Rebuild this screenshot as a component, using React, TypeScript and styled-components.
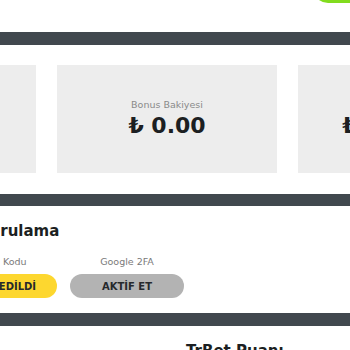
import React from "react";
import styled, { createGlobalStyle } from "styled-components";

const GlobalStyle = createGlobalStyle`
  html, body { margin: 0; padding: 0; background: #ffffff; }
  body { font-family: "DejaVu Sans", "Noto Sans", sans-serif; overflow: hidden; }
`;

const Page = styled.div`
  width: 350px;
  height: 350px;
  overflow: hidden;
  background: #ffffff;
`;

const TopBar = styled.div`
  height: 32px;
  display: flex;
  justify-content: flex-end;
  align-items: flex-start;
`;

const GreenPill = styled.div`
  width: 60px;
  height: 30px;
  margin-top: -27px;
  margin-right: -23px;
  border-radius: 15px;
  background: #82dc1e;
`;

const Divider = styled.div<{ $h: number }>`
  height: ${(p) => p.$h}px;
  background: #41484e;
`;

const CardsRow = styled.div`
  display: flex;
  gap: 21px;
  padding: 20px 0 21px;
  margin-left: -184px;
`;

const Card = styled.div`
  flex: 0 0 220px;
  height: 108px;
  background: #ededed;
  display: flex;
  flex-direction: column;
  align-items: center;
  justify-content: center;
`;

const CardLabel = styled.div`
  font-size: 9.5px;
  line-height: 14px;
  color: #8a8a8a;
  white-space: nowrap;
`;

const CardValue = styled.div`
  font-size: 22px;
  line-height: 28px;
  font-weight: 700;
  color: #1c1f22;
  white-space: nowrap;
`;

const VerifySection = styled.div`
  padding: 15px 0 15px;
  margin-left: -91px;
`;

const SectionTitle = styled.div`
  font-size: 15px;
  line-height: 20px;
  font-weight: 700;
  color: #1c1f22;
  white-space: nowrap;
`;

const FieldRow = styled.div`
  display: flex;
  gap: 13px;
  margin-top: 14px;
  padding-left: 34px;
`;

const Field = styled.div`
  display: flex;
  flex-direction: column;
  align-items: center;
  gap: 5px;
  width: 114px;
`;

const FieldLabel = styled.div`
  font-size: 9.5px;
  line-height: 14px;
  color: #7a7a7a;
  white-space: nowrap;
`;

const PillButton = styled.div<{ $tone: "yellow" | "gray" }>`
  width: 114px;
  height: 24px;
  border-radius: 12px;
  display: flex;
  align-items: center;
  justify-content: center;
  font-size: 10px;
  font-weight: 700;
  color: #26292c;
  white-space: nowrap;
  background: ${(p) => (p.$tone === "yellow" ? "#fdd72f" : "#b3b3b3")};
`;

const PointsSection = styled.div`
  padding: 14px 0 0 186px;
`;

const PointsTitle = styled.div`
  font-size: 15px;
  line-height: 22px;
  font-weight: 700;
  color: #1c1f22;
  white-space: nowrap;
`;

export default function App() {
  return (
    <Page>
      <GlobalStyle />
      <TopBar>
        <GreenPill />
      </TopBar>
      <Divider $h={13} />
      <CardsRow>
        <Card>
          <CardLabel>Ana Bakiye</CardLabel>
          <CardValue>₺ 0.00</CardValue>
        </Card>
        <Card>
          <CardLabel>Bonus Bakiyesi</CardLabel>
          <CardValue>₺ 0.00</CardValue>
        </Card>
        <Card>
          <CardLabel>Çekilebilir Bakiye</CardLabel>
          <CardValue>₺ 1,000.00</CardValue>
        </Card>
      </CardsRow>
      <Divider $h={12} />
      <VerifySection>
        <SectionTitle>Hesap Doğrulama</SectionTitle>
        <FieldRow>
          <Field>
            <FieldLabel>Email Kodu</FieldLabel>
            <PillButton $tone="yellow">TEYİT EDİLDİ</PillButton>
          </Field>
          <Field>
            <FieldLabel>Google 2FA</FieldLabel>
            <PillButton $tone="gray">AKTİF ET</PillButton>
          </Field>
        </FieldRow>
      </VerifySection>
      <Divider $h={13} />
      <PointsSection>
        <PointsTitle>TrBet Puanı</PointsTitle>
      </PointsSection>
    </Page>
  );
}
